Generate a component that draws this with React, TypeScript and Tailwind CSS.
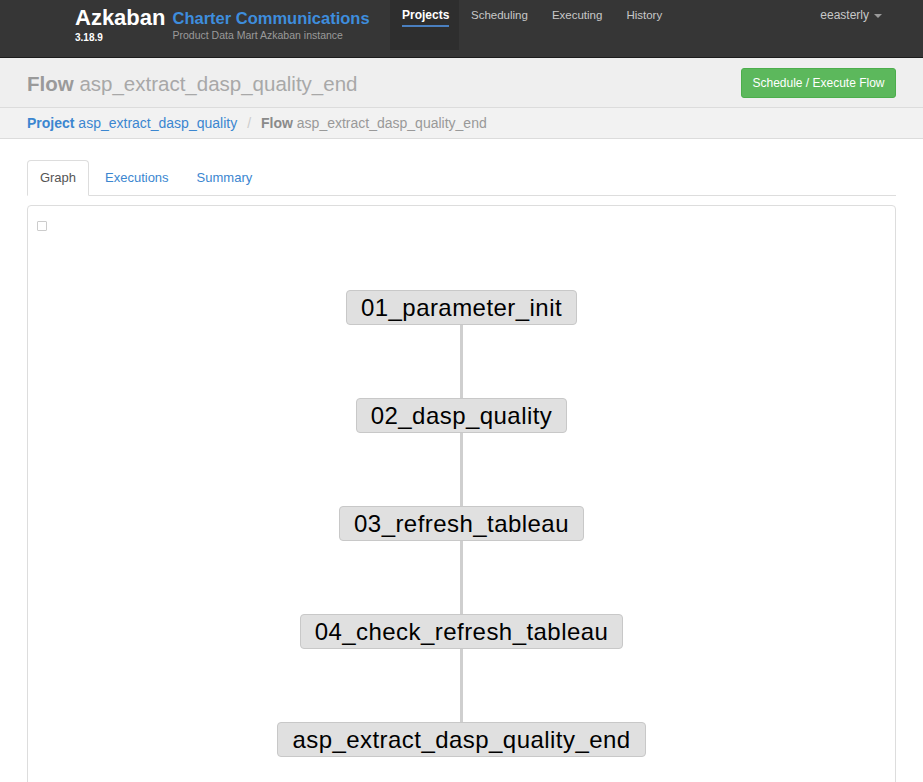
import React from 'react';

const nodes = [
    '01_parameter_init',
    '02_dasp_quality',
    '03_refresh_tableau',
    '04_check_refresh_tableau',
    'asp_extract_dasp_quality_end',
];

const navLinks = ['Scheduling', 'Executing', 'History'];

export default function App() {
    return (
        <div className="min-h-[782px] bg-white font-['Liberation_Sans',Arial,sans-serif] text-[#333]">
            {/* Top navbar */}
            <div className="h-[58px] bg-[#363636] border-b border-[#1c1c1c] flex">
                <div className="pl-[75px] pt-[6px] w-[390px] flex">
                    <div className="flex flex-col">
                        <span className="text-[22px] leading-[24px] font-bold text-white">Azkaban</span>
                        <span className="text-[10px] leading-[12px] font-bold text-white mt-[2px]">3.18.9</span>
                    </div>
                    <div className="flex flex-col ml-[7px] pt-[3px]">
                        <span className="text-[16.5px] leading-[19px] font-bold text-[#3e8ddd]">Charter Communications</span>
                        <span className="text-[10.5px] leading-[12px] text-[#9a9a9a] mt-[1px]">Product Data Mart Azkaban instance</span>
                    </div>
                </div>
                <div className="h-[50px] w-[69px] bg-[#2e2e2e] pl-[12px] pt-[8px] flex items-start">
                    <div className="h-[19px] text-[12px] font-bold text-white border-b-2 border-[#4a7fbf] leading-[14px]">Projects</div>
                </div>
                <div className="flex gap-[24px] pl-[12px] pt-[8px] text-[11.5px] leading-[14px] text-[#c8c8c8]">
                    {navLinks.map((l) => (
                        <span key={l}>{l}</span>
                    ))}
                </div>
                <div className="ml-auto pr-[41px] pt-[8px] flex items-start gap-[5px] text-[12px] leading-[14px] text-[#c8c8c8]">
                    <span>eeasterly</span>
                    <span className="mt-[6px] w-0 h-0 border-l-[4px] border-r-[4px] border-t-[4px] border-l-transparent border-r-transparent border-t-[#9a9a9a]" />
                </div>
            </div>

            {/* Page header */}
            <div className="h-[50px] bg-[#efefef] border-b border-[#dcdcdc] flex items-center px-[27px]">
                <h1 className="text-[20.5px] text-[#a8a8a8] pt-[3px]">
                    <span className="font-bold text-[#9a9a9a]">Flow</span> asp_extract_dasp_quality_end
                </h1>
                <button className="ml-auto h-[30px] w-[155px] rounded-[3px] bg-[#5cb85c] border border-[#4cae4c] text-white text-[12px]">
                    Schedule / Execute Flow
                </button>
            </div>

            {/* Breadcrumb */}
            <div className="h-[31px] bg-[#f2f2f2] border-b border-[#dcdcdc] flex items-center px-[27px] text-[14px]">
                <span className="text-[#3b86d0]"><b>Project</b> asp_extract_dasp_quality</span>
                <span className="text-[#ccc] px-[10px]">/</span>
                <span className="text-[#999]"><b className="text-[#8a8a8a]">Flow</b> asp_extract_dasp_quality_end</span>
            </div>

            {/* Tabs */}
            <div className="px-[27px] pt-[21px]">
                <div className="flex border-b border-[#ddd] h-[36px] text-[13px]">
                    <div className="w-[62px] h-[36px] border border-[#ddd] border-b-white rounded-t-[4px] bg-white flex items-center justify-center text-[#555] -mb-px">Graph</div>
                    <div className="pl-[15px] pr-[15px] flex items-center text-[#3b86d0] ml-[1px]">Executions</div>
                    <div className="px-[13px] flex items-center text-[#3b86d0]">Summary</div>
                </div>

                {/* Graph panel */}
                <div className="mt-[9px] h-[600px] border border-[#ddd] rounded-[4px] px-[9px] pt-[15px] overflow-hidden">
                    <div className="w-[10px] h-[10px] border border-[#ccc] rounded-[1px]" />
                    <div className="flex flex-col items-center mt-[59px]">
                        {nodes.map((n, i) => (
                            <React.Fragment key={n}>
                                {i > 0 && <div className="w-[3px] h-[73px] bg-[#cfcfcf]" />}
                                <div className="h-[35px] px-[14px] flex items-center bg-[#e0e0e0] border border-[#c8c8c8] rounded-[4px] text-[24px] tracking-[0.45px] text-black">
                                    {n}
                                </div>
                            </React.Fragment>
                        ))}
                    </div>
                </div>
            </div>
        </div>
    );
}
